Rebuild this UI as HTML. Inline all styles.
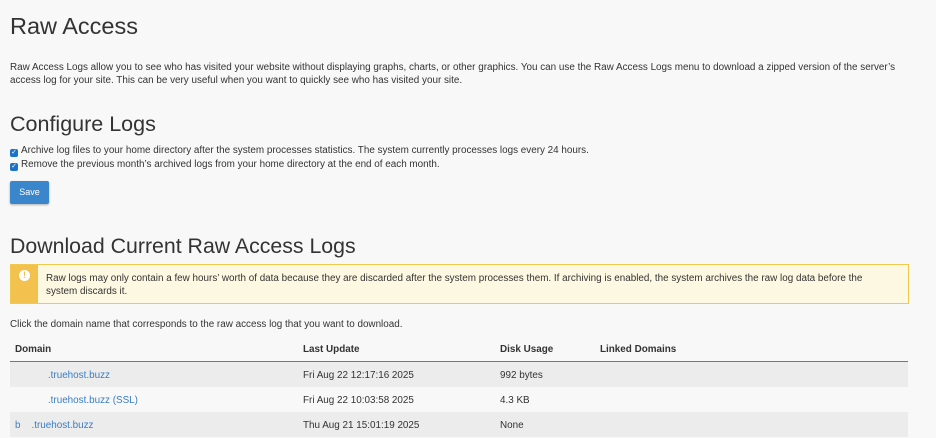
<!DOCTYPE html><html><head><style>
body{margin:0;background:#f8f8f8;font-family:"Liberation Sans",sans-serif;color:#333;width:936px;height:438px;overflow:hidden;position:relative}
.a{position:absolute;white-space:nowrap}
h1,h2{margin:0;font-weight:normal}
.s{font-size:9.9px}
.cb{display:inline-block;width:8px;height:8px;background:#1a73c8;border-radius:2px;vertical-align:-1px;margin-right:3px;color:#fff;font-size:7px;line-height:8px;text-align:center}
.row{position:absolute;left:10px;width:898px;height:25px;font-size:9.9px}
.row span{position:absolute;top:8px}
a{color:#3a7dc4;text-decoration:none}
</style></head><body>
<h1 class="a" style="left:10px;top:13px;font-size:23.5px;color:#333">Raw Access</h1>
<div class="a s" style="left:10px;top:61px;line-height:13px;white-space:normal;width:892px">Raw Access Logs allow you to see who has visited your website without displaying graphs, charts, or other graphics. You can use the Raw Access Logs menu to download a zipped version of the server’s access log for your site. This can be very useful when you want to quickly see who has visited your site.</div>
<h2 class="a" style="left:10px;top:112px;font-size:21.5px">Configure Logs</h2>
<div class="a s" style="left:10px;top:145px"><span class="cb">✓</span>Archive log files to your home directory after the system processes statistics. The system currently processes logs every 24 hours.</div>
<div class="a s" style="left:10px;top:159px"><span class="cb">✓</span>Remove the previous month’s archived logs from your home directory at the end of each month.</div>
<div class="a" style="left:10px;top:181px;width:39px;height:23px;background:#3a86cc;border-radius:2px;box-shadow:0 1px 2px rgba(0,0,0,.3);color:#fff;font-size:9px;text-align:center;line-height:23px">Save</div>
<h2 class="a" style="left:10px;top:234px;font-size:21.3px">Download Current Raw Access Logs</h2>
<div class="a" style="left:10px;top:264px;width:897px;height:38px;border:1px solid #f2c94c;background:#fdf8e1"></div>
<div class="a" style="left:11px;top:265px;width:27px;height:38px;background:#f2c14e"></div>
<div class="a" style="left:19px;top:270px;width:11px;height:11px;border-radius:50%;background:#fff;color:#f2c14e;font-size:9px;font-weight:bold;text-align:center;line-height:11px">!</div>
<div class="a s" style="left:46px;top:272px;line-height:13px;white-space:normal;width:850px">Raw logs may only contain a few hours’ worth of data because they are discarded after the system processes them. If archiving is enabled, the system archives the raw log data before the system discards it.</div>
<div class="a s" style="left:10px;top:319px">Click the domain name that corresponds to the raw access log that you want to download.</div>
<div class="row" style="top:337px;height:24px;border-bottom:1px solid #777;font-weight:bold"><span style="left:5px;top:7px">Domain</span><span style="left:293px;top:7px">Last Update</span><span style="left:490px;top:7px">Disk Usage</span><span style="left:590px;top:7px">Linked Domains</span></div>
<div class="row" style="top:362px;background:#ececec;border-bottom:1px solid #ddd"><span style="left:5px"><a>&nbsp;&nbsp;&nbsp;&nbsp;&nbsp;&nbsp;&nbsp;&nbsp;&nbsp;&nbsp;&nbsp;&nbsp;.truehost.buzz</a></span><span style="left:293px">Fri Aug 22 12:17:16 2025</span><span style="left:490px">992 bytes</span></div>
<div class="row" style="top:387px;background:#f8f8f8;border-bottom:1px solid #ddd"><span style="left:5px"><a>&nbsp;&nbsp;&nbsp;&nbsp;&nbsp;&nbsp;&nbsp;&nbsp;&nbsp;&nbsp;&nbsp;&nbsp;.truehost.buzz (SSL)</a></span><span style="left:293px">Fri Aug 22 10:03:58 2025</span><span style="left:490px">4.3 KB</span></div>
<div class="row" style="top:412px;background:#ececec"><span style="left:5px"><a>b&nbsp;&nbsp;&nbsp;&nbsp;.truehost.buzz</a></span><span style="left:293px">Thu Aug 21 15:01:19 2025</span><span style="left:490px">None</span></div>
</body></html>
